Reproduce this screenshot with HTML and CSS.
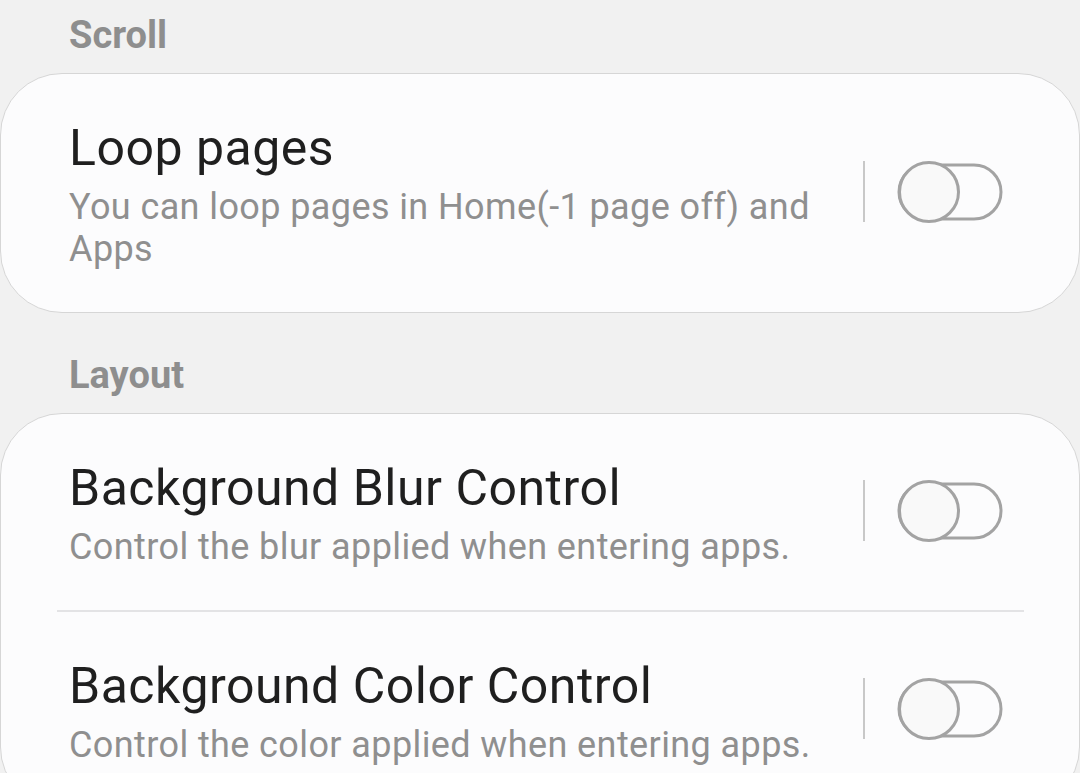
FILE: index.html
```html
<!DOCTYPE html>
<html>
<head>
<meta charset="utf-8">
<link rel="stylesheet" href="styles.css">
</head>
<body>
  <div class="section-header first">Scroll</div>
  <div class="card">
    <div class="row">
      <div class="text">
        <div class="title">Loop pages</div>
        <div class="subtitle">You can loop pages in Home(-1 page off) and Apps</div>
      </div>
      <div class="vdiv"></div>
      <svg class="toggle" width="106" height="64" viewBox="0 0 106 64">
        <rect x="2" y="5" width="102" height="54" rx="27" fill="none" stroke="#a3a3a3" stroke-width="3"/>
        <circle cx="32" cy="32" r="29.5" fill="#f9f9f9" stroke="#a3a3a3" stroke-width="3"/>
      </svg>
    </div>
  </div>

  <div class="section-header">Layout</div>
  <div class="card">
    <div class="row">
      <div class="text">
        <div class="title">Background Blur Control</div>
        <div class="subtitle">Control the blur applied when entering apps.</div>
      </div>
      <div class="vdiv"></div>
      <svg class="toggle" width="106" height="64" viewBox="0 0 106 64">
        <rect x="2" y="5" width="102" height="54" rx="27" fill="none" stroke="#a3a3a3" stroke-width="3"/>
        <circle cx="32" cy="32" r="29.5" fill="#f9f9f9" stroke="#a3a3a3" stroke-width="3"/>
      </svg>
    </div>
    <div class="hdiv"></div>
    <div class="row">
      <div class="text">
        <div class="title">Background Color Control</div>
        <div class="subtitle">Control the color applied when entering apps.</div>
      </div>
      <div class="vdiv"></div>
      <svg class="toggle" width="106" height="64" viewBox="0 0 106 64">
        <rect x="2" y="5" width="102" height="54" rx="27" fill="none" stroke="#a3a3a3" stroke-width="3"/>
        <circle cx="32" cy="32" r="29.5" fill="#f9f9f9" stroke="#a3a3a3" stroke-width="3"/>
      </svg>
    </div>
  </div>
</body>
</html>
```

FILE: styles.css
```css
html, body {
  margin: 0;
  padding: 0;
}
body {
  background: #f1f1f1;
  font-family: Roboto, "Noto Sans", sans-serif;
  width: 1080px;
  height: 773px;
  overflow: hidden;
}
.section-header {
  font-size: 38px;
  font-weight: 700;
  line-height: 46px;
  color: #8e8e8e;
  padding: 39px 0 15px 69px;
}
.section-header.first {
  padding-top: 12px;
}
.card {
  background: #fcfcfd;
  border: 1px solid #d6d6d6;
  border-radius: 62px;
}
.row {
  display: flex;
  align-items: center;
  padding: 45px 76px 42px 68px;
}
.text {
  flex: 1;
  padding-right: 24px;
}
.title {
  font-size: 50px;
  line-height: 58px;
  letter-spacing: 0.5px;
  color: #1f1f1f;
}
.subtitle {
  margin-top: 9px;
  font-size: 36px;
  line-height: 42px;
  letter-spacing: 0.4px;
  color: #8f8f8f;
}
.vdiv {
  width: 2px;
  height: 61px;
  background: #c8c8c8;
  margin: 0 32px 6px 0;
  flex: none;
}
.toggle {
  flex: none;
  display: block;
  margin-bottom: 6px;
}
.hdiv {
  height: 2px;
  background: #e3e3e5;
  margin: 0 55px 0 56px;
}
```
